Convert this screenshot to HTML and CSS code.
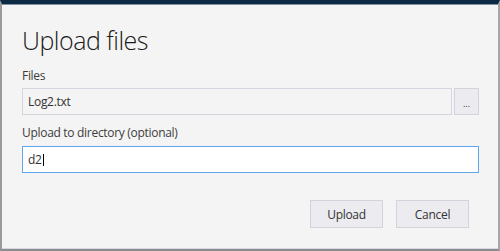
FILE: index.html
```html
<!DOCTYPE html>
<html>
<head>
<meta charset="utf-8">
<link rel="stylesheet" href="styles.css">
</head>
<body>
<div class="window">
  <h1 class="title">Upload files</h1>
  <div class="field">
    <div class="label">Files</div>
    <div class="row">
      <div class="input readonly">Log2.txt</div>
      <button class="browse">...</button>
    </div>
  </div>
  <div class="field second">
    <div class="label">Upload to directory (optional)</div>
    <div class="input active">d2<span class="caret"></span></div>
  </div>
  <div class="actions">
    <button class="btn">Upload</button>
    <button class="btn">Cancel</button>
  </div>
</div>
</body>
</html>
```
FILE: styles.css
```css
html, body {
  margin: 0;
  padding: 0;
  background: #f4f4f4;
}
.window {
  box-sizing: border-box;
  width: 500px;
  height: 251px;
  background: #f4f4f4;
  border-top: 4px solid #0d2a45;
  border-left: 2px solid #9a9a9a;
  border-right: 2px solid #a6a6a6;
  border-bottom: 2px solid #8c8c8c;
  box-shadow: inset 0 1px 0 #7f91a3, inset 0 -1px 0 #d6d6e6;
  padding: 0 19px 0 20px;
  font-family: "Open Sans", "Noto Sans", sans-serif;
  letter-spacing: -0.3px;
  color: #333;
  display: flex;
  flex-direction: column;
}
.title {
  margin: 20px 0 0 0;
  font-size: 25px;
  line-height: 32px;
  font-weight: 300;
  letter-spacing: -0.5px;
  color: #1a1a1a;
}
.field {
  display: flex;
  flex-direction: column;
  margin-top: 12px;
}
.field.second {
  margin-top: 10px;
}
.label {
  font-size: 12px;
  line-height: 16px;
  color: #3c3c3c;
  margin-bottom: 4px;
}
.second .label {
  margin-bottom: 5px;
}
.row {
  display: flex;
  gap: 2px;
}
.input {
  box-sizing: border-box;
  height: 27px;
  border: 1px solid #d6d6e0;
  padding: 0 5px;
  font-size: 12px;
  line-height: 25px;
  color: #333;
  display: flex;
  align-items: center;
}
.readonly {
  flex: 1;
  background: #f4f4f4;
}
.active {
  background: #fff;
  border-color: #5ea6ee;
}
.caret {
  display: inline-block;
  width: 1px;
  height: 12px;
  background: #000;
  margin-left: 1px;
}
.browse {
  box-sizing: border-box;
  width: 25px;
  height: 27px;
  border: 1px solid #d3d3de;
  background: #ebebf0;
  padding: 0;
  font-family: inherit;
  font-size: 9px;
  color: #333;
  line-height: 1;
  padding-top: 4px;
}
.actions {
  display: flex;
  justify-content: flex-end;
  gap: 13px;
  margin-top: 27px;
  padding-right: 10px;
}
.btn {
  box-sizing: border-box;
  width: 73px;
  height: 28px;
  border: 1px solid #d3d3de;
  background: #ebebf0;
  font-family: inherit;
  font-size: 12px;
  letter-spacing: -0.3px;
  color: #333;
  padding: 0;
}
```
